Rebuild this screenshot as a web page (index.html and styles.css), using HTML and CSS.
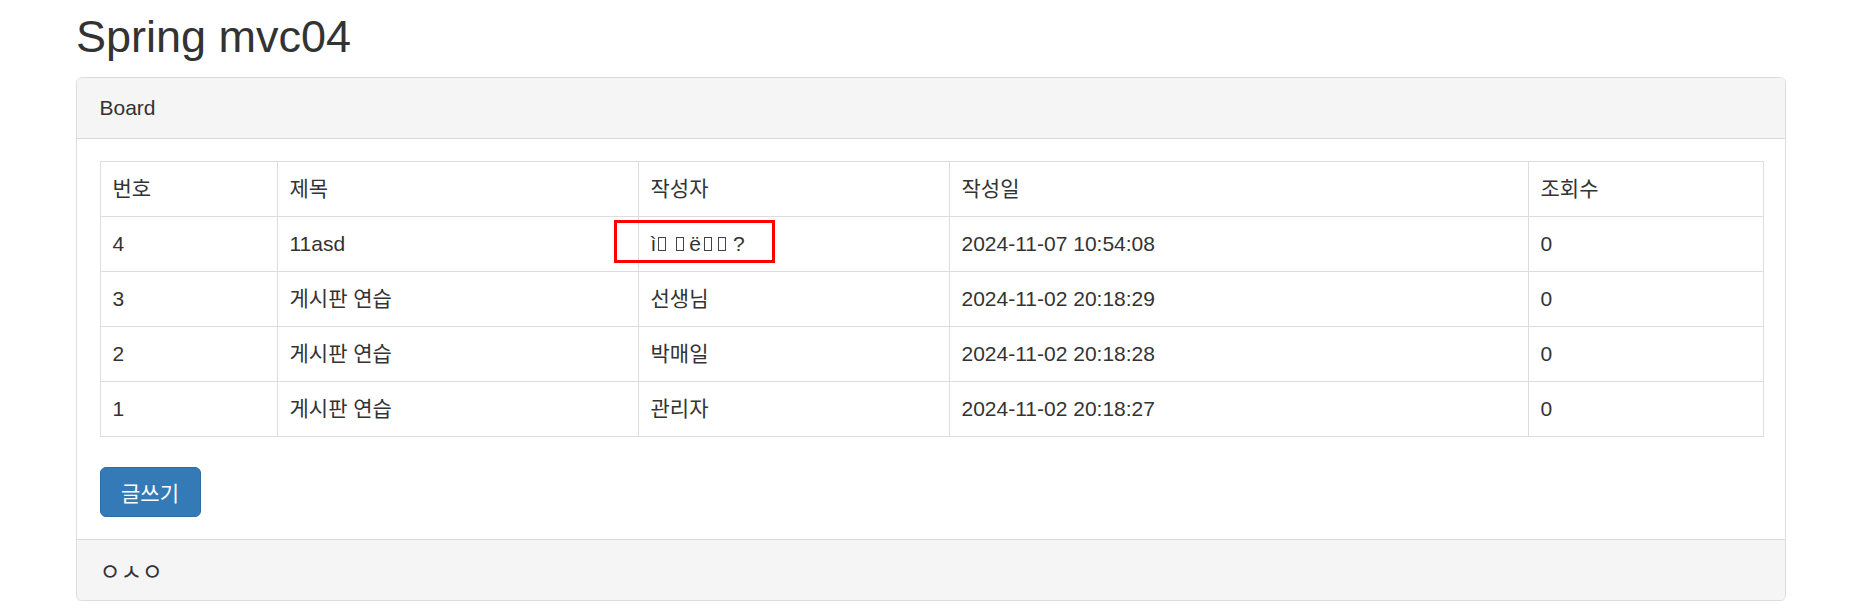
FILE: index.html
```html
<!DOCTYPE html>
<html lang="ko">
<head>
<meta charset="utf-8">
<title>Spring mvc04</title>
<link rel="stylesheet" href="styles.css">
</head>
<body>
<div class="container">
  <h2 class="title">Spring mvc04</h2>
  <div class="panel">
    <div class="panel-heading">Board</div>
    <div class="panel-body">
      <table class="board">
        <colgroup>
          <col class="c-no"><col class="c-title"><col class="c-writer"><col class="c-date"><col class="c-count">
        </colgroup>
        <thead>
          <tr><th>번호</th><th>제목</th><th>작성자</th><th>작성일</th><th>조회수</th></tr>
        </thead>
        <tbody>
          <tr>
            <td>4</td><td>11asd</td>
            <td class="writer">ì<span class="tofu t1"></span><span class="tofu t2"></span>ë<span class="tofu t3"></span><span class="tofu t4"></span>?<span class="mark"></span></td>
            <td>2024-11-07 10:54:08</td><td>0</td>
          </tr>
          <tr><td>3</td><td>게시판 연습</td><td>선생님</td><td>2024-11-02 20:18:29</td><td>0</td></tr>
          <tr><td>2</td><td>게시판 연습</td><td>박매일</td><td>2024-11-02 20:18:28</td><td>0</td></tr>
          <tr><td>1</td><td>게시판 연습</td><td>관리자</td><td>2024-11-02 20:18:27</td><td>0</td></tr>
        </tbody>
      </table>
      <button class="btn-primary" type="button">글쓰기</button>
    </div>
    <div class="panel-footer">ㅇㅅㅇ</div>
  </div>
</div>
</body>
</html>
```

FILE: styles.css
```css
html, body {
  margin: 0;
  padding: 0;
  background: #fff;
}
body {
  font-family: "Liberation Sans", Arial, "Noto Sans CJK KR", sans-serif;
  font-size: 21px;
  line-height: 30px;
  color: #333;
}
.container {
  width: 1756px;
  margin: 0 auto;
  padding: 0 22px 0 24px;
  box-sizing: border-box;
}
.title {
  font-size: 45px;
  line-height: 49.5px;
  font-weight: 500;
  margin: 12px 0 15px 0;
}
.panel {
  border: 1px solid #ddd;
  border-radius: 6px;
  background: #fff;
  box-shadow: 0 1px 1px rgba(0,0,0,.05);
}
.panel-heading {
  background: #f5f5f5;
  border-bottom: 1px solid #ddd;
  padding: 15px 22.5px;
  border-radius: 5px 5px 0 0;
}
.panel-body {
  padding: 22px 22.5px 22px;
}
.board {
  width: 1663px;
  table-layout: fixed;
  border-collapse: collapse;
  margin-bottom: 30px;
}
.c-no { width: 177px; }
.c-title { width: 361px; }
.c-writer { width: 311px; }
.c-date { width: 579px; }
.c-count { width: 235px; }
.board th, .board td {
  border: 1px solid #ddd;
  padding: 12px;
  height: 30px;
  text-align: left;
  font-weight: normal;
  line-height: 30px;
  vertical-align: top;
}
.writer {
  position: relative;
}
.tofu {
  display: inline-block;
  width: 8px;
  height: 14px;
  border: 1px solid #444;
  box-sizing: border-box;
  vertical-align: baseline;
}
.t1 { margin: 0 10px 0 2px; }
.t2 { margin: 0 5px 0 0; }
.t3 { margin: 0 6px 0 3px; }
.t4 { margin: 0 7px 0 0; }
.mark {
  position: absolute;
  left: -25px;
  top: 3px;
  width: 161px;
  height: 43px;
  border: 3px solid #f00;
  box-sizing: border-box;
}
.btn-primary {
  display: block;
  font-family: "Noto Sans CJK KR", "Liberation Sans", sans-serif;
  font-size: 21px;
  line-height: 30px;
  padding: 9px 18px;
  height: 50px;
  width: 101px;
  color: #fff;
  background: #337ab7;
  border: 1px solid #2e6da4;
  border-radius: 6px;
}
.panel-footer {
  background: #f5f5f5;
  border-top: 1px solid #ddd;
  padding: 15px 22.5px;
  border-radius: 0 0 5px 5px;
  font-family: "Noto Sans CJK KR", sans-serif;
  font-size: 23px;
  line-height: 30px;
  height: 30px;
}
```
